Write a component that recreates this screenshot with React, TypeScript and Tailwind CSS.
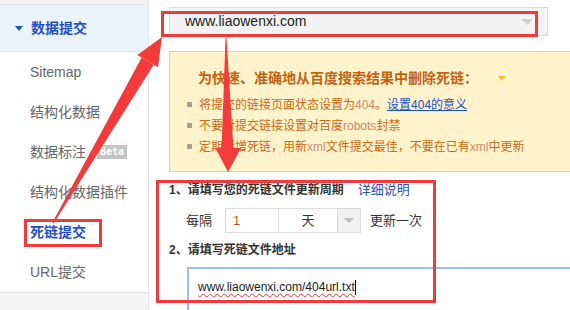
import { ReactNode } from 'react';

const menu = [
  { label: 'Sitemap' },
  { label: '结构化数据' },
  { label: '数据标注', beta: true },
  { label: '结构化数据插件' },
  { label: '死链提交', active: true },
  { label: 'URL提交' },
];

function Bullet({ children }: { children: ReactNode }) {
  return (
    <li className="flex items-center h-[21px]">
      <span className="w-[5px] h-[5px] bg-[#a0a0a0]" />
      <span className="ml-[7px]">{children}</span>
    </li>
  );
}

function Latin({ children }: { children: ReactNode }) {
  return <span className="text-[#d08a6c]">{children}</span>;
}

export default function App() {
  return (
    <div className="relative w-[570px] h-[310px] overflow-hidden bg-white flex font-['Liberation_Sans','Noto_Sans_CJK_SC',sans-serif]">
      {/* Sidebar */}
      <div className="w-[149px] flex-shrink-0 flex flex-col border-r border-[#e4e4e4] bg-[#f4f4f5]">
        <div className="h-[5px] flex-shrink-0 border-b border-[#e6e6e6]" />
        <div className="h-[47px] flex-shrink-0 bg-[#eaf3fc] border-b border-[#e2e6ea] flex items-center pl-[15px]">
          <span className="w-0 h-0 border-l-[4px] border-r-[4px] border-t-[5px] border-l-transparent border-r-transparent border-t-[#1f56c4]" />
          <span className="ml-[8px] text-[14px] font-bold text-[#1f4fc7]">数据提交</span>
        </div>
        <div className="flex-shrink-0 bg-white border-b border-[#e2e2e2]">
          {menu.map((m) => (
            <div key={m.label} className="h-[40px] flex items-center pl-[30px]">
              <span className={`text-[14px] ${m.active ? 'text-[#1e4fd0] font-semibold' : 'text-[#666]'}`}>
                {m.label}
              </span>
              {m.beta && (
                <span className="ml-[11px] h-[14px] px-[3px] bg-[#c4c4c4] text-white text-[10px] leading-[14px] font-['DejaVu_Sans_Mono',monospace] font-bold">
                  Beta
                </span>
              )}
            </div>
          ))}
        </div>
      </div>

      {/* Main */}
      <div className="flex-1 pl-[20px] pt-[7px]">
        <div className="w-[379px] h-[29px] border border-[#dcdcdc] bg-[#f3f3f3] flex items-center justify-between pl-[15px] pr-[14px]">
          <span className="text-[14px] text-[#222]">www.liaowenxi.com</span>
          <span className="w-0 h-0 border-l-[6px] border-r-[6px] border-t-[6px] border-l-transparent border-r-transparent border-t-[#cfcfcf]" />
        </div>

        <div className="mt-[15px] w-[420px] h-[121px] border border-[#f5cd93] bg-[#fff3cc] pl-[17px] pt-[16px]">
          <div className="flex items-center h-[20px] ml-[11px]">
            <span className="text-[14px] font-bold text-[#c5620f]">为快速、准确地从百度搜索结果中删除死链：</span>
            <span className="ml-[20px] w-0 h-0 border-l-[4px] border-r-[4px] border-t-[5px] border-l-transparent border-r-transparent border-t-[#f2c12e]" />
          </div>
          <ul className="mt-[6px] text-[12px] text-[#cf6a12]">
            <Bullet>
              将提交的链接页面状态设置为<Latin>404</Latin>。
              <a className="text-[#1c4fcf] underline">设置404的意义</a>
            </Bullet>
            <Bullet>
              不要对提交链接设置对百度<Latin>robots</Latin>封禁
            </Bullet>
            <Bullet>
              定期新增死链，用新<Latin>xml</Latin>文件提交最佳，不要在已有<Latin>xml</Latin>中更新
            </Bullet>
          </ul>
        </div>

        <div className="mt-[8px] h-[20px] flex items-center text-[12px]">
          <span className="font-bold text-[#333]">1、请填写您的死链文件更新周期</span>
          <a className="ml-[14px] text-[13px] text-[#1f56c8]">详细说明</a>
        </div>

        <div className="mt-[8px] flex items-center pl-[17px] text-[13px] text-[#333]">
          <span>每隔</span>
          <div className="ml-[13px] h-[25px] flex border border-[#dcdcdc] bg-white">
            <span className="w-[53px] pl-[7px] flex items-center text-[#b85d10] border-r border-[#dcdcdc]">1</span>
            <span className="w-[59px] flex items-center justify-center border-r border-[#dcdcdc]">天</span>
            <span className="w-[22px] bg-[#f0f0f0] flex items-center justify-center">
              <span className="w-0 h-0 border-l-[5px] border-r-[5px] border-t-[5px] border-l-transparent border-r-transparent border-t-[#bdbdbd]" />
            </span>
          </div>
          <span className="ml-[9px]">更新一次</span>
        </div>

        <div className="mt-[7px] h-[20px] flex items-center text-[12px] font-bold text-[#333]">
          2、请填写死链文件地址
        </div>

        <div className="mt-[7px] ml-[18px] w-[420px] h-[80px] border-2 border-[#9dbdee] pl-[9px] pt-[8px]">
          <div className="h-[20px] flex items-center text-[12px] text-[#222]">
            <span className="underline decoration-wavy decoration-[#e33] decoration-1 underline-offset-2">
              www.liaowenxi.com/404url.txt
            </span>
            <span className="w-[1px] h-[15px] bg-black" />
          </div>
        </div>
      </div>

      {/* Annotation boxes */}
      <div className="absolute left-[24px] top-[219px] w-[78px] h-[28px] border-[3px] border-[#f23a3a]" />
      <div className="absolute left-[161px] top-[11px] w-[377px] h-[26px] border-[3px] border-[#f23a3a]" />
      <div className="absolute left-[156px] top-[180px] w-[280px] h-[123px] border-[3px] border-[#f23a3a]" />

      {/* Arrows */}
      <svg className="absolute inset-0 pointer-events-none" width="570" height="310" viewBox="0 0 570 310">
        <g fill="#f43b3b">
          <polygon points="53.6,223.4 52.4,222.6 141.7,57.5 153.7,64.7" />
          <polygon points="162,37 158,67.2 137.4,55" />
          <polygon points="225.5,38 226.5,38 233.5,150 221.5,150" />
          <polygon points="215.5,148 241,148 228,172" />
        </g>
      </svg>
    </div>
  );
}
